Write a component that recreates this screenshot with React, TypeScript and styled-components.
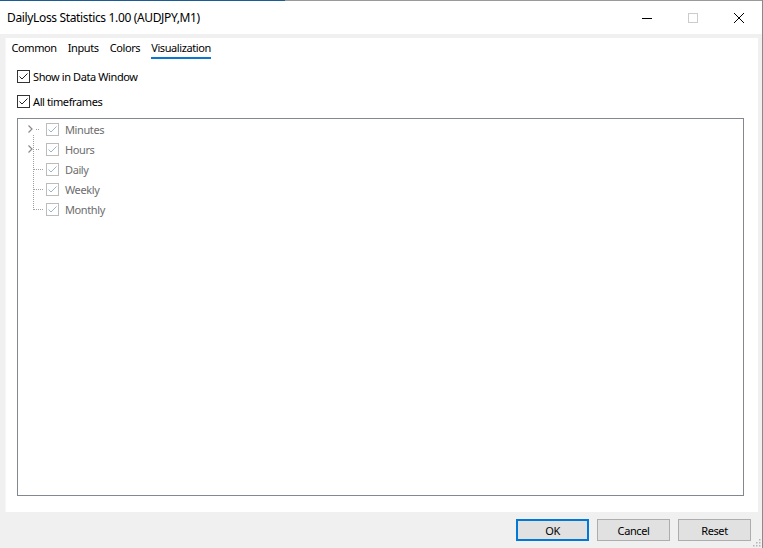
import React from 'react';
import styled, { createGlobalStyle } from 'styled-components';

const GlobalStyle = createGlobalStyle`
  html, body {
    margin: 0;
    padding: 0;
    background: #f0f0f0;
  }
  body {
    font-family: "Segoe UI", "Noto Sans", "Liberation Sans", sans-serif;
    font-size: 11px;
    letter-spacing: -0.4px;
    color: #000;
  }
`;

const Window = styled.div`
  width: 763px;
  height: 548px;
  box-sizing: border-box;
  display: flex;
  flex-direction: column;
  background: #f0f0f0;
  border-right: 1px solid #8a8a8a;
  position: relative;
`;

const TopEdge = styled.div`
  height: 1px;
  background: linear-gradient(to right, #1b5c97 0, #1b5c97 285px, #9a9a9a 285px);
`;

const TitleBar = styled.div`
  height: 33px;
  background: #fff;
  display: flex;
  align-items: center;
  padding-left: 7px;
`;

const Title = styled.div`
  flex: 1;
  font-size: 12px;
  letter-spacing: -0.35px;
  padding-bottom: 1px;
`;

const Controls = styled.div`
  display: flex;
  height: 100%;
`;

const ControlButton = styled.div`
  width: 46px;
  height: 100%;
  display: flex;
  align-items: center;
  justify-content: center;
`;

const Body = styled.div`
  flex: 1;
  display: flex;
  flex-direction: column;
  padding: 4px 4px 0 5px;
`;

const Panel = styled.div`
  height: 474px;
  background: #fff;
  display: flex;
  flex-direction: column;
  border-left: 1px solid #f7f7f7;
`;

const Tabs = styled.div`
  display: flex;
  padding: 3px 0 0 0;
  height: 18px;
`;

const Tab = styled.div`
  padding: 0 5.5px;
  display: flex;
  flex-direction: column;
  align-items: stretch;
`;

const TabLabel = styled.span<{ $active?: boolean }>`
  line-height: 14px;
  padding-bottom: 2px;
  border-bottom: 2px solid ${p => (p.$active ? '#0b78d0' : 'transparent')};
`;

const Content = styled.div`
  flex: 1;
  display: flex;
  flex-direction: column;
  padding: 5px 14px 16px 11px;
`;

const CheckRow = styled.label`
  display: flex;
  align-items: center;
  gap: 3px;
  height: 25px;
`;

const TreeBox = styled.div`
  margin-top: 4px;
  flex: 1;
  border: 1px solid #828790;
  background: #fff;
`;

const TreeRow = styled.div`
  display: flex;
  align-items: center;
  height: 20px;
  color: #6d6d6d;
`;

const Connector = styled.div`
  width: 28px;
  height: 20px;
  flex-shrink: 0;
`;

const TreeLabel = styled.span`
  margin-left: 6px;
`;

const Footer = styled.div`
  height: 36px;
  display: flex;
  align-items: center;
  justify-content: flex-end;
  gap: 8px;
  padding-right: 7px;
`;

const Button = styled.div<{ $default?: boolean }>`
  width: 73px;
  height: 22px;
  box-sizing: border-box;
  display: flex;
  align-items: center;
  justify-content: center;
  background: #e1e1e1;
  border: ${p => (p.$default ? '2px solid #0078d7' : '1px solid #adadad')};
`;

const Grip = styled.svg`
  position: absolute;
  right: 1px;
  bottom: 1px;
`;

function CheckBox({ disabled }: { disabled?: boolean }) {
  return (
    <svg width="13" height="13" viewBox="0 0 13 13" style={{ flexShrink: 0 }}>
      <rect x="0.5" y="0.5" width="12" height="12" fill="#fff" stroke={disabled ? '#bcbcbc' : '#333'} />
      <path
        d="M2.5 6.5 L5 9 L10.5 3.5"
        fill="none"
        stroke={disabled ? '#9ab3d3' : '#222'}
        strokeWidth="1"
      />
    </svg>
  );
}

type Node = { label: string; expandable: boolean; index: number };

function TreeConnector({ expandable, index, last }: { expandable: boolean; index: number; last: boolean }) {
  const dot = '#a0a0a0';
  return (
    <Connector>
      <svg width="28" height="20" viewBox="0 0 28 20">
        {expandable && <path d="M10.5 6.5 L14 10 L10.5 13.5" fill="none" stroke="#8a8a8a" strokeWidth="1.2" />}
        {expandable ? (
          <>
            <rect x="18" y="10" width="1" height="1" fill={dot} />
            <rect x="20" y="10" width="1" height="1" fill={dot} />
          </>
        ) : (
          [16, 18, 20, 22, 24].map(x => <rect key={x} x={x} y="10" width="1" height="1" fill={dot} />)
        )}
        {index === 0 && [16, 18].map(y => <rect key={y} x="15" y={y} width="1" height="1" fill={dot} />)}
        {index > 0 &&
          Array.from({ length: last ? 6 : 10 }, (_, i) => i * 2).map(y => (
            <rect key={y} x="15" y={y} width="1" height="1" fill={dot} />
          ))}
      </svg>
    </Connector>
  );
}

const nodes: Node[] = [
  { label: 'Minutes', expandable: true, index: 0 },
  { label: 'Hours', expandable: true, index: 1 },
  { label: 'Daily', expandable: false, index: 2 },
  { label: 'Weekly', expandable: false, index: 3 },
  { label: 'Monthly', expandable: false, index: 4 },
];

export default function App() {
  return (
    <>
      <GlobalStyle />
      <Window>
        <TopEdge />
        <TitleBar>
          <Title>DailyLoss Statistics 1.00 (AUDJPY,M1)</Title>
          <Controls>
            <ControlButton>
              <svg width="10" height="10" viewBox="0 0 10 10">
                <rect x="0" y="5" width="10" height="1" fill="#000" />
              </svg>
            </ControlButton>
            <ControlButton>
              <svg width="10" height="10" viewBox="0 0 10 10">
                <rect x="0.5" y="0.5" width="9" height="9" fill="none" stroke="#cccccc" />
              </svg>
            </ControlButton>
            <ControlButton>
              <svg width="10" height="10" viewBox="0 0 10 10">
                <path d="M0 0 L10 10 M10 0 L0 10" stroke="#000" strokeWidth="1" />
              </svg>
            </ControlButton>
          </Controls>
        </TitleBar>
        <Body>
          <Panel>
            <Tabs>
              <Tab><TabLabel>Common</TabLabel></Tab>
              <Tab><TabLabel>Inputs</TabLabel></Tab>
              <Tab><TabLabel>Colors</TabLabel></Tab>
              <Tab><TabLabel $active>Visualization</TabLabel></Tab>
            </Tabs>
            <Content>
              <CheckRow>
                <CheckBox />
                <span>Show in Data Window</span>
              </CheckRow>
              <CheckRow>
                <CheckBox />
                <span>All timeframes</span>
              </CheckRow>
              <TreeBox>
                {nodes.map(n => (
                  <TreeRow key={n.label}>
                    <TreeConnector expandable={n.expandable} index={n.index} last={n.index === nodes.length - 1} />
                    <CheckBox disabled />
                    <TreeLabel>{n.label}</TreeLabel>
                  </TreeRow>
                ))}
              </TreeBox>
            </Content>
          </Panel>
          <Footer>
            <Button $default>OK</Button>
            <Button>Cancel</Button>
            <Button>Reset</Button>
          </Footer>
        </Body>
        <Grip width="10" height="10" viewBox="0 0 10 10">
          {[[8, 2], [8, 5], [8, 8], [5, 5], [5, 8], [2, 8]].map(([x, y]) => (
            <rect key={`${x}-${y}`} x={x} y={y} width="1.5" height="1.5" fill="#b5b5b5" />
          ))}
        </Grip>
      </Window>
    </>
  );
}
